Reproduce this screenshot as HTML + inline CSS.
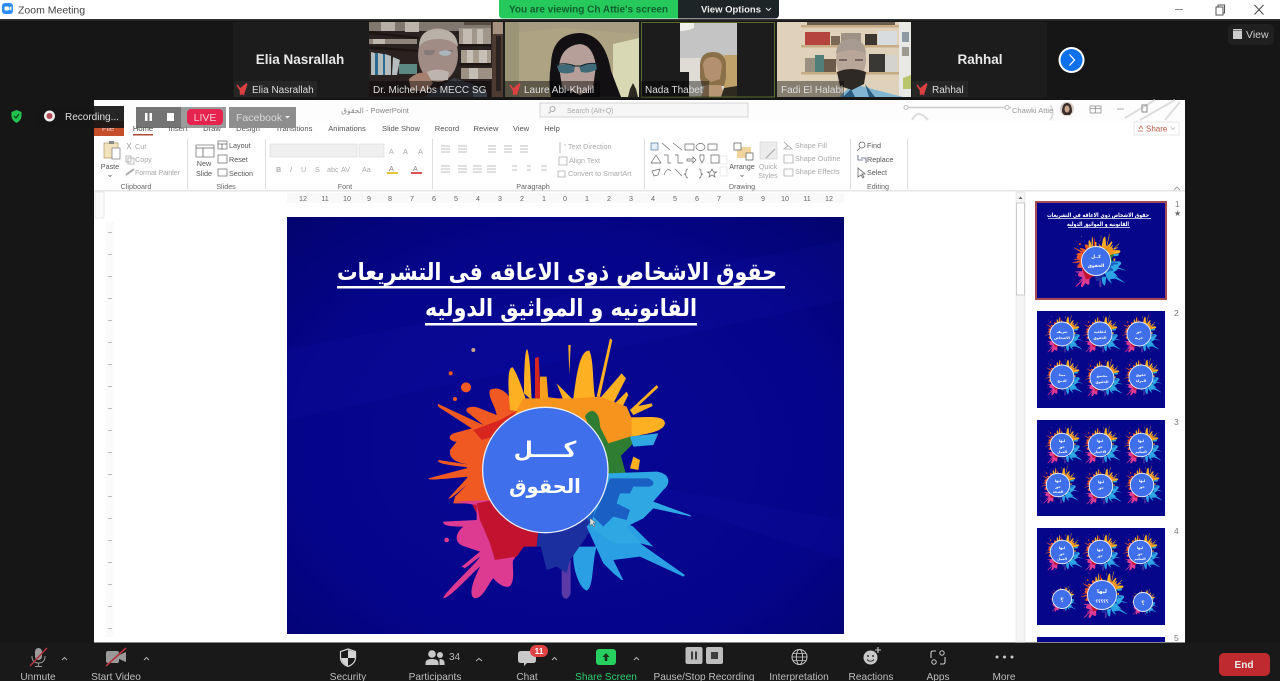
<!DOCTYPE html>
<html lang="en"><head><meta charset="utf-8"><title>Zoom Meeting</title>
<style>
html,body{margin:0;padding:0;background:#161616;width:1280px;height:681px;overflow:hidden}
svg{display:block;position:absolute;left:0;top:0}
#root{filter:blur(.3px)}
text{font-family:"Liberation Sans",sans-serif}
.ar{font-family:"DejaVu Sans",sans-serif;font-weight:bold;direction:rtl;text-anchor:middle;fill:#fff}
.t{font-size:7.6px;fill:#555}
.d{font-size:7.2px;fill:#aaa}
.a{font-size:7.2px;fill:#555}
.m{text-anchor:middle}
.n{font-size:10px;fill:#ddd}
.b{font-size:10.1px;fill:#bdbdbd;text-anchor:middle}
.g{font-size:7.2px;fill:#666;text-anchor:middle}
.r{font-size:7.2px;fill:#666;text-anchor:middle}
.big{font-size:13.5px;font-weight:bold;fill:#e8e8e8;text-anchor:middle}
.s{fill:none;stroke:#666;stroke-width:.8}
.sd{fill:none;stroke:#aaa;stroke-width:.8}
.c{fill:#3f6fea;stroke:#e8eefc;stroke-width:.9}
</style></head><body>
<svg id="root" width="1280" height="681" viewBox="0 0 1280 681" xmlns="http://www.w3.org/2000/svg">
<defs>
<radialGradient id="bg" cx=".5" cy=".55" r=".75"><stop offset="0" stop-color="#070796"/><stop offset=".65" stop-color="#05058a"/><stop offset="1" stop-color="#03036e"/></radialGradient>
<g id="sp">
<path fill="#f05a22" d="M436,420L240,290L200,400L205,500Z"/>
<path fill="#c1122f" d="M436,420L205,500L250,590L340,650L410,650Z"/>
<path fill="#1c2f9e" d="M436,420L410,650L520,650L590,590Z"/>
<path fill="#1a5fc4" d="M436,420L590,600L680,540L680,440Z"/>
<path fill="#2e7d32" d="M436,420L680,440L650,330Z"/>
<path fill="#f7941d" d="M436,420L650,330L590,220L430,200L300,240Z"/>
<path fill="#f05a22" d="M350,240C330,190 300,165 270,180C262,200 285,225 290,255L240,235C215,225 195,232 200,245L250,285L115,222C110,225 115,232 130,240L215,295L160,310C140,320 150,335 170,335L150,360C145,395 185,400 215,405L115,390C110,398 130,405 210,412L85,445C85,452 120,448 205,440L145,505C150,510 170,490 200,465L165,500L160,520L280,520L300,300Z"/>
<path fill="#dd3a92" d="M280,510L160,515L230,525L230,570L130,575C125,590 170,590 190,590C165,610 160,640 195,650L240,665L185,710L195,715L240,680C230,700 130,790 130,805C150,805 215,730 240,710C215,760 205,800 225,805C250,805 265,760 280,745C300,770 330,780 335,760C345,740 335,700 340,690L400,610Z"/>
<path fill="#c1122f" d="M280,510L230,520L240,570L270,640L285,690L350,680L400,610Z"/>
<path fill="#d7261e" d="M355,240L300,270L220,300L245,330L280,320L300,300Z"/>
<path fill="#2a9fe4" d="M560,590L610,700L640,730L665,750L670,750L640,690L720,680L850,740L855,735L720,640L760,650L700,590L600,540Z"/>
<path fill="#2a9fe4" d="M525,650C510,680 530,770 560,782C582,772 575,700 590,650Z"/>
<path fill="#5b3aa8" d="M485,690L512,690L512,790C505,812 490,812 485,790Z"/>
<path fill="#1c2f9e" d="M420,640L440,720L470,710L500,730L510,690L560,620L500,590Z"/>
<path fill="#2fa7e2" d="M620,430L770,425C810,430 815,460 790,480L760,515L870,555L875,560L760,535L730,565L680,590L725,640L640,640L570,590Z"/>
<path fill="#1a5fc4" d="M630,445L745,445C770,455 760,470 745,470L700,470L690,490L660,490L650,520L690,540L680,570L640,560L610,590L580,560Z"/>
<path fill="#fdb022" d="M330,240C325,180 320,110 338,112C352,130 372,190 378,210L360,245Z"/>
<path fill="#fdb022" d="M372,190C372,120 375,55 382,58C392,90 392,160 395,210Z"/>
<path fill="#d7261e" d="M405,85L416,80L422,205L405,215Z"/>
<path fill="#f7a11d" d="M420,140L440,140L445,205L420,210Z"/>
<path fill="#fdb022" d="M505,45L512,45L508,135Z"/>
<path fill="#fdb022" d="M470,160L490,210L520,205C530,130 540,60 568,62C582,90 578,170 585,200L560,250Z"/>
<path fill="#fdb022" d="M590,200L630,25L637,30L600,200Z"/>
<path fill="#fdb022" d="M600,205L665,130L678,145L640,220Z"/>
<path fill="#fdb022" d="M640,225L680,185L685,195L665,235Z"/>
<path fill="#fdb022" d="M690,240L770,165L775,172L715,228L755,220L758,228L700,255Z"/>
<path fill="#fdb022" d="M690,262C750,262 792,255 795,280C790,310 720,312 695,322L660,340Z"/>
<path fill="#f7941d" d="M350,240L370,205L440,205L520,205L600,200L680,230L695,265L695,322L640,360L620,350Z"/>
<path fill="#2e7d32" d="M555,260C570,230 600,240 600,290L625,340L690,320L775,310L760,330L700,340L640,400L625,420Z"/>
<path fill="#2fa7e2" d="M690,320L775,310L760,345L700,350Z"/>
<path fill="#fdb022" d="M700,380L720,390L715,420L690,415Z"/>
<circle cx="198" cy="172" r="15" fill="#f05a22"/><circle cx="220" cy="60" r="6" fill="#c9a38a"/><circle cx="152" cy="130" r="6" fill="#f05a22"/><circle cx="165" cy="207" r="6" fill="#f05a22"/><circle cx="140" cy="630" r="7" fill="#dd3a92"/>
</g>
<g id="mic"><path d="M-1.500 2.500l7-5.500 1 1.200-3 9-4.500 2z" fill="#d9403f"/><path d="M-4-1l7 10" stroke="#d9403f" stroke-width="1.600"/></g>
</defs>

<rect width="1280" height="681" fill="#161616"/>
<rect x="0" y="0" width="1280" height="19" fill="#fff"/>
<rect x="0" y="19" width="1280" height="1.500" fill="#333"/>
<!-- title bar -->
<rect x="2" y="3" width="11" height="11" rx="3" fill="#2d8cff"/><rect x="4.500" y="6.500" width="4.500" height="4" rx="1" fill="#fff"/><path d="M9.500 7.500l2-1.200v4.400l-2-1.200z" fill="#fff"/>
<text x="18" y="13.500" font-size="10.500" fill="#444">Zoom Meeting</text>
<path d="M499 0h179v18.500h-175q-4 0-4-4z" fill="#25c95c"/>
<path d="M678 0h101v14q0 4.500-4 4.500h-97z" fill="#1e2526"/>
<text x="588.500" y="12.500" font-size="10" font-weight="bold" fill="#116030" text-anchor="middle">You are viewing Ch Attie's screen</text>
<text x="701" y="12.500" font-size="9.500" font-weight="bold" fill="#eee">View Options</text>
<path d="M766 8l2.500 2.500 2.500-2.500" fill="none" stroke="#ddd" stroke-width="1"/>
<path d="M1175 9.500h8" stroke="#888" stroke-width="1"/>
<path d="M1216 7h7v8h-7zM1218 7v-2h6.500v8h-1.500" fill="none" stroke="#555" stroke-width="1"/>
<path d="M1254.500 5l9 9.500M1263.500 5l-9 9.500" stroke="#444" stroke-width="1"/>

<!-- video strip -->
<rect x="233" y="22" width="814" height="76" fill="#1c1c1c"/>
<text class="big" x="300" y="64">Elia Nasrallah</text>
<text class="big" x="980" y="64">Rahhal</text>

<!-- Michel -->
<svg x="369" y="22" width="134" height="75" viewBox="0 0 134 75">
<rect width="134" height="75" fill="#2a2220"/>
<rect x="0" y="0" width="122" height="9" fill="#80776e"/><rect x="12" y="0" width="14" height="9" fill="#b5afa5"/><rect x="36" y="0" width="14" height="10" fill="#bbb5ab"/><rect x="95" y="0" width="27" height="3" fill="#5a4c42"/>
<path d="M0 9l50 6v2L0 12z" fill="#1c1512"/>
<rect x="0" y="17" width="48" height="5" fill="#8f857a"/><rect x="4" y="17" width="12" height="5" fill="#bdb7ad"/>
<path d="M0 24l50 4v2L0 27z" fill="#1c1512"/>
<rect x="90" y="6" width="32" height="16" fill="#a0968a"/><rect x="94" y="7" width="9" height="15" fill="#c2bcb2"/><rect x="108" y="7" width="6" height="15" fill="#c2bcb2"/>
<rect x="90" y="22" width="32" height="2.500" fill="#1c1512"/>
<rect x="92" y="28" width="30" height="13" fill="#a89c8e"/><rect x="98" y="28" width="6" height="13" fill="#c6c0b6"/><rect x="110" y="28" width="8" height="13" fill="#c6c0b6"/>
<rect x="90" y="41" width="32" height="2.500" fill="#1c1512"/>
<rect x="92" y="46" width="32" height="11" fill="#9d9184"/><rect x="100" y="46" width="9" height="11" fill="#c2bcb2"/>
<path d="M2 30l4 1v22H2zM9 31l5 1v21H9zM16 32l6 2v19h-6zM24 35l7 3-3 15h-5z" fill="#b5bcbe"/><rect x="6" y="31" width="3" height="22" fill="#2c6b8f"/><rect x="14" y="32" width="2" height="21" fill="#2c6b8f"/>
<rect x="30" y="42" width="18" height="10" fill="#5c8a83"/>
<rect x="123" y="0" width="11" height="75" fill="#4d3a30"/><rect x="124" y="0" width="10" height="12" fill="#a58f7e"/><rect x="127" y="14" width="5" height="55" fill="#2a2220"/>
<path d="M85 56l30 10v9H55z" fill="#3a3d46"/><path d="M104 66l14 4v5h-14z" fill="#5d6672"/>
<ellipse cx="69" cy="33" rx="20" ry="27" fill="#a08c84"/>
<path d="M50 25q0-18 19-18 19 0 20 18-6-8-20-8t-19 8z" fill="#b9b0a8"/>
<path d="M55 29h11M72 29h12" stroke="#7a7270" stroke-width="1.300"/><ellipse cx="76" cy="31" rx="6" ry="2.800" fill="#a9b6bd"/><ellipse cx="60" cy="31" rx="5" ry="2.300" fill="#857a78"/>
<path d="M58 50q10-5 22 0l-1 8H60z" fill="#bdb4ae"/>
<path d="M40 57q8-8 18-6l6 10-6 8H42z" fill="#a5806f"/>
</svg>
<!-- Laure -->
<svg x="505" y="22" width="134" height="75" viewBox="0 0 134 75">
<rect width="134" height="75" fill="#aea383"/>
<rect x="0" y="0" width="14" height="75" fill="#9c9476"/>
<path d="M14 0h120v12L60 6 14 10z" fill="#a89c82"/>
<path d="M108 22l26-6v59h-26z" fill="#d8d9b4"/>
<path d="M46 42q1-31 30-31 24 2 30 38l10 26H46q-3-15 0-33z" fill="#121013"/>
<path d="M54 44q2-20 21-22 13 1 16 22l-3 22-13 7-18-8z" fill="#b79f99"/>
<path d="M52 44q9-3 18 0l-1 6q-8 3-15 0zM74 44q9-4 17-2l1 5q-7 5-16 3z" fill="#3f6a78"/>
<path d="M50 43q10-3 20 1h6q8-4 17-2" fill="none" stroke="#17262c" stroke-width="1"/>
<path d="M123 75l2-8 3-6 3 6 2 8z" fill="#2c2a20"/>
</svg>
<!-- Nada -->
<svg x="641" y="22" width="134" height="75" viewBox="0 0 134 75">
<rect width="134" height="75" fill="#1c1c1c"/>
<rect x="39" y="0" width="57" height="75" fill="#c9c9c8"/>
<path d="M39 0h57v33L84 38 39 50z" fill="#c4c4c4"/>
<path d="M39 0h14v6q-7 3-14 3z" fill="#f0efe9"/>
<path d="M39 36h45v39H39z" fill="#dedcd4"/>
<rect x="83" y="33" width="13" height="42" fill="#bfa16a"/>
<rect x="39" y="50" width="9" height="25" fill="#1c1c1c"/>
<path d="M59 42q1-12 13-12 12 0 13 12l0 14-2 8H61l-2-8z" fill="#8a7048"/>
<path d="M62 43q1-8 10-8 8 1 9 9l-2 13-9 3-6-5z" fill="#b3906f"/>
<path d="M60 75l4-12 16 0 4 12z" fill="#b79673"/>
<path d="M83 66l13-2v11H80z" fill="#2e2a20"/>
</svg>
<rect x="641.500" y="22.500" width="133" height="74.500" fill="none" stroke="#5a6b2e" stroke-width="1"/>
<!-- Fadi -->
<svg x="777" y="22" width="134" height="75" viewBox="0 0 134 75">
<rect width="134" height="75" fill="#e0d2ba"/>
<rect x="122" y="0" width="12" height="75" fill="#e8e8e4"/>
<rect x="125" y="10" width="7" height="10" fill="#8d9aa4"/><rect x="125" y="25" width="7" height="9" fill="#9c9a90"/>
<rect x="24" y="3" width="98" height="2.500" fill="#c7ab85"/><rect x="24" y="23" width="98" height="2.500" fill="#c7ab85"/><rect x="24" y="50" width="98" height="2.500" fill="#c7ab85"/>
<rect x="30" y="0" width="88" height="3" fill="#6a5c4e"/>
<rect x="28" y="10" width="25" height="13" fill="#b5443e"/><rect x="54" y="14" width="9" height="9" fill="#7a6a55"/>
<rect x="64" y="11" width="20" height="12" fill="#9d9285"/><rect x="88" y="12" width="12" height="11" fill="#3d3630"/><rect x="101" y="9" width="19" height="14" fill="#d8dcdf"/>
<rect x="28" y="36" width="10" height="14" fill="#9a9080"/><rect x="38" y="33" width="9" height="17" fill="#4f7f78"/><rect x="47" y="37" width="12" height="13" fill="#6b5a4a"/>
<rect x="92" y="32" width="16" height="18" fill="#3a3835"/><rect x="108" y="33" width="12" height="17" fill="#d5d3cd"/>
<path d="M76 62l50 13H62z" fill="#82b5d2"/><path d="M88 62l10 13h-6zM66 75l8-8 4 8z" fill="#2b5f82"/>
<ellipse cx="74" cy="38" rx="15" ry="21" fill="#b8a699"/>
<path d="M59 32q1-15 15-15t15 15q-14-8-30 0z" fill="#a89c92"/>
<path d="M62 38h8M78 38h8" stroke="#4a3f38" stroke-width="1.200"/>
<path d="M60 50q14-6 29 0l-2 12-12 6-12-4z" fill="#2e2924"/>
<path d="M126 56l8-3v14h-8z" fill="#b8c56b"/>
</svg>
<!-- labels -->
<rect x="234" y="81" width="83" height="16" fill="#262626"/>
<rect x="369" y="81" width="122" height="16" fill="#000" opacity=".4"/>
<rect x="505" y="81" width="95" height="16" fill="#000" opacity=".45"/>
<rect x="641" y="81" width="68" height="16" fill="#000" opacity=".4"/>
<rect x="777" y="81" width="67" height="16" fill="#000" opacity=".4"/>
<rect x="912" y="81" width="56" height="16" fill="#262626"/>
<use href="#mic" x="241" y="86"/><use href="#mic" x="514" y="86"/><use href="#mic" x="921" y="86"/>
<text class="n" x="252" y="93">Elia Nasrallah</text>
<text class="n" x="373" y="93">Dr. Michel Abs MECC SG</text>
<text class="n" x="524" y="93">Laure Abi-Khalil</text>
<text class="n" x="645" y="93">Nada Thabet</text>
<text class="n" x="781" y="93">Fadi El Halabi</text>
<text class="n" x="932" y="93">Rahhal</text>
<!-- next -->
<circle cx="1071.500" cy="60" r="13" fill="#fff"/><circle cx="1071.500" cy="60" r="11" fill="#0e71eb"/>
<path d="M1069.500 54.500l5 5.500-5 5.500" fill="none" stroke="#fff" stroke-width="1.300"/>
<!-- view -->
<rect x="1228" y="24" width="46" height="21" rx="5" fill="#202020"/>
<path d="M1233 31h9v8h-9zM1233 30.500v-1.500h9v1.500" fill="#ccc"/>
<text x="1246" y="38" font-size="10.500" fill="#ccc">View</text>

<!-- shared screen -->
<rect x="94" y="100" width="1091" height="542" fill="#fff"/>
<rect x="94" y="100" width="1091" height="21" fill="#fdfdfd"/>
<rect x="94" y="642" width="1091" height="1" fill="#888"/>
<!-- ribbon top -->
<text x="375" y="113" font-size="7.500" fill="#888" text-anchor="middle" style='font-family:"Liberation Sans","DejaVu Sans",sans-serif'>الحقوق  -  PowerPoint</text>
<rect x="540" y="103" width="208" height="14" fill="#f6f6f6" stroke="#ccc" stroke-width=".8"/>
<circle cx="552.500" cy="109" r="2.500" fill="none" stroke="#aaa"/><path d="M550.500 111.500l-2 2" stroke="#aaa"/>
<text x="567" y="113" font-size="7" fill="#aaa">Search (Alt+Q)</text>
<path d="M906 107.500h105" stroke="#ccc" stroke-width="1.500"/><circle cx="906" cy="107.500" r="2" fill="#fff" stroke="#bbb"/><circle cx="1007" cy="107.500" r="2" fill="#fff" stroke="#bbb"/>
<path d="M912 120q6-12 16 0M1050 105a12 12 0 0 1 0 15M1125 118l30-18M1140 120l35-20M1165 120l15-18" fill="none" stroke="#ddd" stroke-width="2"/>
<text x="1012" y="113" font-size="7.500" fill="#999">Chawki Attie</text>
<circle cx="1067" cy="109" r="7" fill="#d6cfc8"/><path d="M1062 112q0-9 5-9 5 0 5 9l-2 3h-6z" fill="#3c2d28"/><ellipse cx="1067" cy="109" rx="2.500" ry="3.500" fill="#caa68f"/>
<path d="M1090 106h11v7h-11zM1095.500 106v7M1090 108.500h11" fill="none" stroke="#888" stroke-width=".7"/>
<path d="M1117 109h7" stroke="#aaa"/><path d="M1142 105h5v7h-5z" fill="none" stroke="#888"/>
<!-- tabs -->
<rect x="94" y="121" width="30" height="15" fill="#c44f2a"/>
<text class="t m" x="108" y="131" style="fill:#eecfc4">File</text>
<text class="t m" x="143" y="131" style="fill:#444">Home</text><rect x="133" y="134" width="20" height="1.500" fill="#b04a36"/>
<text class="t m" x="178" y="131">Insert</text>
<text class="t m" x="212" y="131">Draw</text>
<text class="t m" x="248" y="131">Design</text>
<text class="t m" x="294" y="131">Transitions</text>
<text class="t m" x="347" y="131">Animations</text>
<text class="t m" x="401" y="131">Slide Show</text>
<text class="t m" x="447" y="131">Record</text>
<text class="t m" x="486" y="131">Review</text>
<text class="t m" x="521" y="131">View</text>
<text class="t m" x="552" y="131">Help</text>
<rect x="1134" y="122" width="45" height="13" fill="#fff" stroke="#e2e2e2" stroke-width=".8"/>
<text x="1146" y="131.500" font-size="8" fill="#b5573f">Share</text><path d="M1138 131h5M1139 129l2-3 2 3" fill="none" stroke="#b5573f" stroke-width=".7"/><path d="M1171 127.500l2 2 2-2" fill="none" stroke="#aaa" stroke-width=".7"/>
<!-- ribbon separators -->
<path d="M187.500 139v50M265.500 139v50M432.500 139v50M644.500 139v50M850.500 139v50M907.500 139v50" stroke="#dedede"/>
<rect x="94" y="190" width="1091" height="1.500" fill="#e6e6e6"/>
<!-- clipboard -->
<path d="M104 143h14v15h-14z" fill="#f2e3bd" stroke="#b09a6a" stroke-width=".7"/><path d="M109 141h5v3h-5z" fill="#888"/><rect x="112" y="148" width="8" height="11" fill="#fff" stroke="#777" stroke-width=".7"/>
<text class="a m" x="110" y="169">Paste</text><path d="M108.500 175l1.500 1.500 1.500-1.500" class="s"/>
<path d="M127 143l4 6M131 143l-4 6" class="sd"/><text class="d" x="135" y="149">Cut</text>
<path d="M126 156h5v6h-5zM128 158h6v6h-6z" class="sd"/><text class="d" x="135" y="162">Copy</text>
<path d="M126 175l8-6" stroke="#aaa" stroke-width="2"/><text class="d" x="135" y="175" textLength="45">Format Painter</text>
<text class="g" x="136" y="189">Clipboard</text>
<!-- slides -->
<path d="M196 145h18v12h-18z" fill="#fff" stroke="#777" stroke-width=".8"/><path d="M196 148h18M203 148v9" class="s"/>
<text class="a m" x="204" y="166">New</text><text class="a m" x="204" y="176">Slide</text>
<rect x="218" y="141" width="9" height="8" fill="#fff" stroke="#666" stroke-width=".7"/><path d="M218 144h9M222 144v5" class="s"/><text class="a" x="229" y="148">Layout</text>
<rect x="218" y="155" width="9" height="8" fill="#fff" stroke="#666" stroke-width=".7"/><text class="a" x="229" y="162">Reset</text>
<rect x="218" y="169" width="9" height="7" fill="#fff" stroke="#666" stroke-width=".7"/><text class="a" x="229" y="176">Section</text>
<text class="g" x="226" y="189">Slides</text>
<!-- font -->
<rect x="270" y="144" width="87" height="13" fill="#efefef" stroke="#ddd" stroke-width=".7"/><rect x="359" y="144" width="25" height="13" fill="#efefef" stroke="#ddd" stroke-width=".7"/>
<text class="d" x="389" y="154" font-size="9">A</text><text class="d" x="403" y="154" font-size="8">A</text><text class="d" x="418" y="154" font-size="9">A</text>
<text class="d" x="276" y="172" font-weight="bold">B</text><text class="d" x="290" y="172" font-style="italic">I</text><text class="d" x="301" y="172">U</text><text class="d" x="315" y="172">S</text><text class="d" x="327" y="172">abc</text><text class="d" x="341" y="172">AV</text><text class="d" x="362" y="172">Aa</text>
<text class="a" x="389" y="171" style="fill:#888">A</text><rect x="387" y="172" width="11" height="2" fill="#e3c63a"/>
<text class="a" x="413" y="171" style="fill:#888">A</text><rect x="411" y="172" width="11" height="2" fill="#d9534f"/>
<text class="g" x="345" y="189">Font</text>
<!-- paragraph -->
<path d="M441 146h9M441 149h9M441 152h9M458 146h9M458 149h9M458 152h9M488 146h8M488 149h8M488 152h8M504 146h8M504 149h8M504 152h8M520 146h8M520 149h8M520 152h8M441 166h9M441 169h9M441 172h9M458 166h9M458 169h9M458 172h9M473 166h9M473 169h9M473 172h9M487 166h9M487 169h9M487 172h9M512 166h5M512 170h5M527 166h4M527 170h4M541 166h6M541 170h6" class="sd"/>
<path d="M560 142v11M564 145h2" class="sd"/><text class="d" x="568" y="149">Text Direction</text>
<path d="M559 157h8v8h-8z" class="sd"/><text class="d" x="569" y="163">Align Text</text>
<path d="M558 171h7v6h-7z" class="sd"/><text class="d" x="568" y="176">Convert to SmartArt</text>
<text class="g" x="533" y="189">Paragraph</text>
<!-- drawing -->
<path d="M651 143h7v7h-7z" fill="#e4eef8" stroke="#5a7ea0" stroke-width=".7"/>
<path d="M662 143l8 7M673 143l9 7M685 144h9v6h-9zM696 147a4.500 3.500 0 1 0 9 0a4.500 3.500 0 1 0-9 0M708 144h9v6h-9zM651 163l5-8 5 8zM664 155h4v8h3M675 155h3v8h5M687 159h6v-2l3 3-3 3v-2h-6zM700 155h4v4l-2 4-2-4zM711 155h8v8h-8zM652 171l8-2-2 6-4 1zM664 175q3-8 7-4M675 169l7 7M688 169q-2 0-2 3t-2 2q2 0 2 2t2 2M699 169q2 0 2 3t2 2q-2 0-2 2t-2 2" fill="none" stroke="#666" stroke-width=".7"/>
<path d="M712 169l1.500 3h3l-2.500 2 1 3-3-2-3 2 1-3-2.500-2h3z" fill="none" stroke="#666" stroke-width=".7"/>
<rect x="720" y="156" width="7" height="8" fill="#fff" stroke="#ddd" stroke-width=".6"/><rect x="720" y="167" width="7" height="9" fill="#fff" stroke="#ddd" stroke-width=".6"/>
<rect x="737" y="147" width="14" height="11" fill="#f0d49c"/><rect x="734" y="143" width="7" height="7" fill="#fff" stroke="#555" stroke-width=".7"/><rect x="746" y="153" width="7" height="7" fill="#fff" stroke="#555" stroke-width=".7"/>
<text class="a m" x="742" y="169">Arrange</text><path d="M740.500 175l1.500 1.500 1.500-1.500" class="s"/>
<rect x="760" y="142" width="17" height="17" fill="#ececec" stroke="#ccc" stroke-width=".6"/><path d="M766 158l9-9" stroke="#aaa" stroke-width="1.200"/>
<text class="d m" x="768" y="169">Quick</text><text class="d m" x="768" y="178">Styles</text>
<path d="M784 142l4 4-4 3h8zM784 155h9v8h-9zM784 169h9v7h-9z" class="sd"/>
<text class="d" x="795" y="148">Shape Fill</text><text class="d" x="795" y="161">Shape Outline</text><text class="d" x="795" y="174">Shape Effects</text>
<text class="g" x="742" y="189">Drawing</text>
<!-- editing -->
<circle cx="862" cy="145" r="3" class="s"/><path d="M860 148l-3 3" class="s"/><text class="a" x="867" y="148">Find</text>
<path d="M858 155v5h5M866 163v-5h-5" fill="none" stroke="#558" stroke-width=".8"/><text class="a" x="867" y="162">Replace</text>
<path d="M858 168v9l3-2 2 3 1-1-2-3h3z" class="s"/><text class="a" x="867" y="175">Select</text>
<text class="g" x="878" y="189">Editing</text>
<path d="M1174 190l3-3 3 3" fill="none" stroke="#888" stroke-width=".8"/>

<!-- rulers -->
<rect x="287" y="193" width="557" height="10" fill="#f9f9f9"/>
<text class="r" x="303" y="201">12</text><text class="r" x="325" y="201">11</text><text class="r" x="347" y="201">10</text><text class="r" x="369" y="201">9</text><text class="r" x="390" y="201">8</text><text class="r" x="412" y="201">7</text><text class="r" x="434" y="201">6</text><text class="r" x="456" y="201">5</text><text class="r" x="478" y="201">4</text><text class="r" x="500" y="201">3</text><text class="r" x="522" y="201">2</text><text class="r" x="544" y="201">1</text><text class="r" x="565" y="201">0</text><text class="r" x="587" y="201">1</text><text class="r" x="609" y="201">2</text><text class="r" x="631" y="201">3</text><text class="r" x="653" y="201">4</text><text class="r" x="675" y="201">5</text><text class="r" x="697" y="201">6</text><text class="r" x="719" y="201">7</text><text class="r" x="741" y="201">8</text><text class="r" x="763" y="201">9</text><text class="r" x="785" y="201">10</text><text class="r" x="807" y="201">11</text><text class="r" x="829" y="201">12</text>
<rect x="95" y="192" width="9" height="26" fill="#fbfbfb" stroke="#ddd" stroke-width=".6"/>
<rect x="106" y="222" width="8" height="415" fill="#fafafa"/>
<path d="M110 232v1M110 254v1M110 276v1M110 298v1M110 320v1M110 342v1M110 364v1M110 386v1M110 408v1M110 430v1M110 452v1M110 474v1M110 496v1M110 518v1M110 540v1M110 562v1M110 584v1M110 606v1M110 628v1" stroke="#bbb" stroke-width="4" stroke-dasharray="1 1"/>
<!-- scrollbar -->
<rect x="1016" y="192" width="9" height="450" fill="#f4f4f4" stroke="#e0e0e0" stroke-width=".6"/>
<rect x="1016.500" y="203" width="8" height="92" fill="#fff" stroke="#bbb" stroke-width=".7"/>
<path d="M1018.500 199l2-2.500 2 2.500" fill="#666"/>

<!-- slide -->
<rect x="287" y="217" width="557" height="417" fill="url(#bg)"/>
<path d="M287 420L844 300V240L287 350ZM560 470L844 520V560Z" fill="#1a1ac0" opacity=".1"/>
<text class="ar" x="557" y="280" font-size="24" textLength="440" lengthAdjust="spacingAndGlyphs">حقوق الاشخاص ذوى الاعاقه فى التشريعات</text>
<rect x="337" y="286" width="448" height="2.500" fill="#fff"/>
<text class="ar" x="561" y="316" font-size="24" textLength="272" lengthAdjust="spacingAndGlyphs">القانونيه و المواثيق الدوليه</text>
<rect x="425" y="323" width="272" height="2.500" fill="#fff"/>
<use href="#sp" transform="translate(400,330) scale(.3333)"/>
<circle cx="545.300" cy="470" r="62.700" fill="#3f6fea" stroke="#e8eefc" stroke-width="1.300"/>
<text class="ar" x="545" y="457" font-size="22">كــــل</text>
<text class="ar" x="545" y="493" font-size="19.500">الحقوق</text>
<path d="M590 518l0 8 2-2 2 3 1-1-2-3h3z" fill="#ddd" stroke="#333" stroke-width=".4"/>

<!-- thumbnails panel -->
<rect x="1026" y="192" width="159" height="450" fill="#fff"/>
<rect x="1036" y="202" width="130" height="97" fill="#06068a" stroke="#a64a56" stroke-width="2"/>
<text class="ar" x="1098" y="217" font-size="6" textLength="102" lengthAdjust="spacingAndGlyphs">حقوق الاشخاص ذوى الاعاقه فى التشريعات</text>
<rect x="1048" y="218" width="103" height=".7" fill="#fff"/>
<text class="ar" x="1098" y="226" font-size="6" textLength="62" lengthAdjust="spacingAndGlyphs">القانونيه و المواثيق الدوليه</text>
<rect x="1068" y="227" width="62" height=".7" fill="#fff"/>
<use href="#sp" transform="translate(1066.400,232.400) scale(.068)"/>
<circle class="c" cx="1096" cy="261" r="14.500"/>
<text class="ar" x="1096" y="258" font-size="4.500">كــل</text><text class="ar" x="1096" y="267" font-size="4.500">الحقوق</text>
<text x="1175" y="207" font-size="8" fill="#777">1</text><text x="1174" y="216" font-size="8" fill="#666">★</text>

<rect x="1037" y="311" width="128" height="97" fill="#06068a"/>
<rect x="1037" y="420" width="128" height="96" fill="#06068a"/>
<rect x="1037" y="528" width="128" height="97" fill="#06068a"/>
<rect x="1037" y="637" width="128" height="5" fill="#06068a"/>
<text x="1174" y="316" font-size="8.500" fill="#777">2</text><text x="1174" y="425" font-size="8.500" fill="#777">3</text><text x="1174" y="534" font-size="8.500" fill="#777">4</text><text x="1174" y="641" font-size="8.500" fill="#777">5</text>

<!-- thumb 2 -->
<use href="#sp" transform="translate(1041.100,313.800) scale(.048)"/><use href="#sp" transform="translate(1079.100,313.800) scale(.048)"/><use href="#sp" transform="translate(1118.100,313.800) scale(.048)"/><use href="#sp" transform="translate(1041.100,356.800) scale(.048)"/><use href="#sp" transform="translate(1081.100,357.800) scale(.048)"/><use href="#sp" transform="translate(1120.100,356.800) scale(.048)"/>
<circle class="c" cx="1062" cy="334" r="12"/><circle class="c" cx="1100" cy="334" r="12"/><circle class="c" cx="1139" cy="334" r="12"/><circle class="c" cx="1062" cy="377" r="12"/><circle class="c" cx="1102" cy="378" r="12"/><circle class="c" cx="1141" cy="377" r="12"/>
<text class="ar" x="1062" y="333" font-size="3.500">تعريف</text><text class="ar" x="1062" y="339" font-size="3.500">الاشخاص</text><text class="ar" x="1100" y="333" font-size="3.500">اتفاقيه</text><text class="ar" x="1100" y="339" font-size="3.500">الحقوق</text><text class="ar" x="1139" y="333" font-size="3.500">حق</text><text class="ar" x="1139" y="339" font-size="3.500">حرية</text><text class="ar" x="1062" y="376" font-size="3.500">مبدا</text><text class="ar" x="1062" y="382" font-size="3.500">الدمج</text><text class="ar" x="1102" y="377" font-size="3.500">مجتمع</text><text class="ar" x="1102" y="383" font-size="3.500">الحقوق</text><text class="ar" x="1141" y="376" font-size="3.500">حقوق</text><text class="ar" x="1141" y="382" font-size="3.500">المراه</text>
<!-- thumb 3 -->
<use href="#sp" transform="translate(1041.100,424.800) scale(.048)"/><use href="#sp" transform="translate(1079.100,424.800) scale(.048)"/><use href="#sp" transform="translate(1120.100,424.800) scale(.048)"/><use href="#sp" transform="translate(1037.100,464.800) scale(.048)"/><use href="#sp" transform="translate(1080.100,465.800) scale(.048)"/><use href="#sp" transform="translate(1121.100,464.800) scale(.048)"/>
<circle class="c" cx="1062" cy="445" r="11.700"/><circle class="c" cx="1100" cy="445" r="11.700"/><circle class="c" cx="1141" cy="445" r="11.700"/><circle class="c" cx="1058" cy="485" r="11.700"/><circle class="c" cx="1101" cy="486" r="11.700"/><circle class="c" cx="1142" cy="485" r="11.700"/>
<text class="ar" x="1062" y="442" font-size="3.500">ليها</text><text class="ar" x="1062" y="448" font-size="3.500">حق</text><text class="ar" x="1062" y="453" font-size="3.500">العمل</text><text class="ar" x="1100" y="442" font-size="3.500">ليها</text><text class="ar" x="1100" y="448" font-size="3.500">حق</text><text class="ar" x="1100" y="453" font-size="3.500">الاختيار</text><text class="ar" x="1141" y="442" font-size="3.500">ليها</text><text class="ar" x="1141" y="448" font-size="3.500">حق</text><text class="ar" x="1141" y="453" font-size="3.500">التعليم</text><text class="ar" x="1058" y="482" font-size="3.500">ليها</text><text class="ar" x="1058" y="488" font-size="3.500">حق</text><text class="ar" x="1058" y="493" font-size="3.500">الصحه</text><text class="ar" x="1101" y="483" font-size="3.500">ليها</text><text class="ar" x="1101" y="489" font-size="3.500">حق</text><text class="ar" x="1142" y="482" font-size="3.500">ليها</text><text class="ar" x="1142" y="488" font-size="3.500">حق</text>
<!-- thumb 4 -->
<use href="#sp" transform="translate(1041.100,531.800) scale(.048)"/><use href="#sp" transform="translate(1079.100,531.800) scale(.048)"/><use href="#sp" transform="translate(1119.100,531.800) scale(.048)"/><use href="#sp" transform="translate(1047.600,585.100) scale(.033)"/><use href="#sp" transform="translate(1075.800,569.800) scale(.06)"/><use href="#sp" transform="translate(1128.600,588.100) scale(.033)"/>
<circle class="c" cx="1062" cy="552" r="11.700"/><circle class="c" cx="1100" cy="552" r="11.700"/><circle class="c" cx="1140" cy="552" r="11.700"/><circle class="c" cx="1062" cy="599" r="9.500"/><circle class="c" cx="1102" cy="595" r="14.500"/><circle class="c" cx="1143" cy="602" r="9.500"/>
<text class="ar" x="1062" y="549" font-size="3.500">ليها</text><text class="ar" x="1062" y="555" font-size="3.500">حق</text><text class="ar" x="1062" y="560" font-size="3.500">العمل</text><text class="ar" x="1100" y="551" font-size="3.500">ليها</text><text class="ar" x="1100" y="557" font-size="3.500">حق</text><text class="ar" x="1140" y="549" font-size="3.500">ليها</text><text class="ar" x="1140" y="555" font-size="3.500">حق</text><text class="ar" x="1140" y="560" font-size="3.500">التعليم</text><text class="ar" x="1102" y="593" font-size="5.500">ليها</text><text class="ar" x="1102" y="603" font-size="4.500">؟؟؟؟؟</text><text class="ar" x="1062" y="602" font-size="6">؟</text><text class="ar" x="1143" y="605" font-size="6">؟</text>

<!-- recording overlay -->
<path d="M16.500 110l5 2v4q0 4-5 7-5-3-5-7v-4z" fill="#23c24f"/><path d="M14 116l2 2 3-4" fill="none" stroke="#0c3d18" stroke-width="1.200"/>
<rect x="34" y="106" width="90" height="22" fill="#161616" opacity=".93"/>
<circle cx="49.500" cy="116" r="5.500" fill="#eee"/><circle cx="49.500" cy="116" r="3" fill="#b04a55"/>
<text x="65" y="120" font-size="10" fill="#ddd">Recording...</text>
<rect x="136" y="107" width="45" height="21" fill="#5c5c5c" opacity=".85"/>
<rect x="145" y="113" width="2.500" height="8" fill="#fff"/><rect x="149.500" y="113" width="2.500" height="8" fill="#fff"/><rect x="167" y="113" width="7" height="8" fill="#fff"/>
<rect x="181" y="107" width="45" height="21" fill="#8a8a8a" opacity=".85"/>
<rect x="187" y="109" width="36" height="16" rx="4" fill="#e5234e"/><text x="205" y="121" font-size="10.500" fill="#f4c9d3" text-anchor="middle">LIVE</text>
<rect x="229" y="107" width="67" height="21" fill="#8e8e8e"/><text x="236" y="121" font-size="10.500" fill="#d8d8d8">Facebook</text><path d="M285 116l2.500 2.500 2.500-2.500z" fill="#eee"/>

<!-- bottom toolbar -->
<rect x="0" y="643" width="1280" height="38" fill="#191919"/>
<text class="b" x="38" y="680">Unmute</text><text class="b" x="116" y="680">Start Video</text><text class="b" x="348" y="680">Security</text><text class="b" x="435" y="680">Participants</text><text class="b" x="527" y="680">Chat</text>
<text class="b" x="606" y="680" style="fill:#2ecc71">Share Screen</text><text class="b" x="704" y="680">Pause/Stop Recording</text><text class="b" x="799" y="680">Interpretation</text><text class="b" x="871" y="680">Reactions</text><text class="b" x="938" y="680">Apps</text><text class="b" x="1004" y="680">More</text>
<!-- unmute -->
<rect x="35" y="648" width="7" height="12" rx="3.500" fill="#9a9a9a"/><path d="M32 656q0 7 6.500 7t6.500-7M38.500 663v3M35 666.500h7" fill="none" stroke="#9a9a9a" stroke-width="1"/><path d="M47 648l-17 18" stroke="#b5333f" stroke-width="1.600"/>
<path d="M62 660l2.500-2.500 2.500 2.500" fill="none" stroke="#aaa" stroke-width="1.100"/>
<!-- video -->
<rect x="106" y="651" width="13" height="12" rx="2" fill="#9a9a9a"/><path d="M119 655l7-3v10l-7-3z" fill="#9a9a9a"/><path d="M126 648l-20 18" stroke="#b5333f" stroke-width="1.600"/>
<path d="M144 660l2.500-2.500 2.500 2.500" fill="none" stroke="#aaa" stroke-width="1.100"/>
<!-- security -->
<path d="M348 649l7.500 2.500v6q0 6-7.500 9-7.500-3-7.500-9v-6z" fill="none" stroke="#d5d5d5" stroke-width="1.200"/><path d="M348 650v8h7v-.5v-5.500zM348 658v8q-6-2.500-7-8z" fill="#d5d5d5"/>
<!-- participants -->
<circle cx="432" cy="654" r="3.800" fill="#c9c9c9"/><path d="M425.500 665v-2q0-4 6.500-4t6.500 4v2z" fill="#c9c9c9"/><circle cx="440" cy="655" r="3" fill="#c9c9c9"/><path d="M439.500 659q5 0 5 4v2h-5z" fill="#c9c9c9"/>
<text x="449" y="660" font-size="10" fill="#bbb">34</text><path d="M476 661l3-2.500 3 2.500" fill="none" stroke="#aaa" stroke-width="1.100"/>
<!-- chat -->
<path d="M521 651h12q3 0 3 3v6q0 3-3 3h-6l-3 3v-3h-3q-3 0-3-3v-6q0-3 3-3z" fill="#c9c9c9"/>
<rect x="530" y="645" width="18" height="12" rx="6" fill="#e04343"/><text x="539" y="654" font-size="8.500" font-weight="bold" fill="#fff" text-anchor="middle">11</text>
<path d="M552 660l2.500-2.500 2.500 2.500" fill="none" stroke="#aaa" stroke-width="1.100"/>
<!-- share -->
<rect x="596" y="649" width="20" height="16" rx="3" fill="#26cf5e"/><path d="M606 653l-3.500 4h2.200v4h2.600v-4h2.200z" fill="#11361d"/>
<path d="M634 660l2.500-2.500 2.500 2.500" fill="none" stroke="#aaa" stroke-width="1.100"/>
<!-- pause/stop -->
<rect x="685.500" y="647" width="17" height="17" rx="2" fill="#bdbdbd"/><rect x="691" y="651.500" width="2" height="8" fill="#3c3c3c"/><rect x="695" y="651.500" width="2" height="8" fill="#3c3c3c"/>
<rect x="706" y="647" width="17" height="17" rx="2" fill="#bdbdbd"/><rect x="711" y="652" width="7" height="7" fill="#3c3c3c"/>
<!-- interpretation -->
<circle cx="799.500" cy="657" r="7.500" fill="none" stroke="#c9c9c9" stroke-width="1"/><ellipse cx="799.500" cy="657" rx="3.200" ry="7.500" fill="none" stroke="#c9c9c9" stroke-width=".9"/><path d="M792 657h15M793 653.500h13M793 660.500h13" stroke="#c9c9c9" stroke-width=".8"/>
<!-- reactions -->
<circle cx="870.500" cy="657.500" r="7" fill="#c9c9c9"/><circle cx="868" cy="656" r="1" fill="#333"/><circle cx="873" cy="656" r="1" fill="#333"/><path d="M867 659.500q3.500 3.500 7 0" fill="none" stroke="#333"/><path d="M878 647v6M875 650h6" stroke="#c9c9c9" stroke-width="1.100"/>
<!-- apps -->
<path d="M931 658v-5q0-2 2-2h3M945 657v5q0 2-2 2h-3" fill="none" stroke="#c9c9c9" stroke-width="1.100"/><circle cx="942" cy="653" r="2.200" fill="none" stroke="#c9c9c9"/><circle cx="934" cy="662" r="2.200" fill="none" stroke="#c9c9c9"/>
<!-- more -->
<circle cx="997" cy="657" r="1.500" fill="#c9c9c9"/><circle cx="1004.500" cy="657" r="1.500" fill="#c9c9c9"/><circle cx="1012" cy="657" r="1.500" fill="#c9c9c9"/>
<!-- end -->
<rect x="1219" y="653" width="51" height="23" rx="5" fill="#bf2a2f"/><text x="1244" y="668" font-size="10" font-weight="bold" fill="#eee" text-anchor="middle">End</text>
</svg>
</body></html>
